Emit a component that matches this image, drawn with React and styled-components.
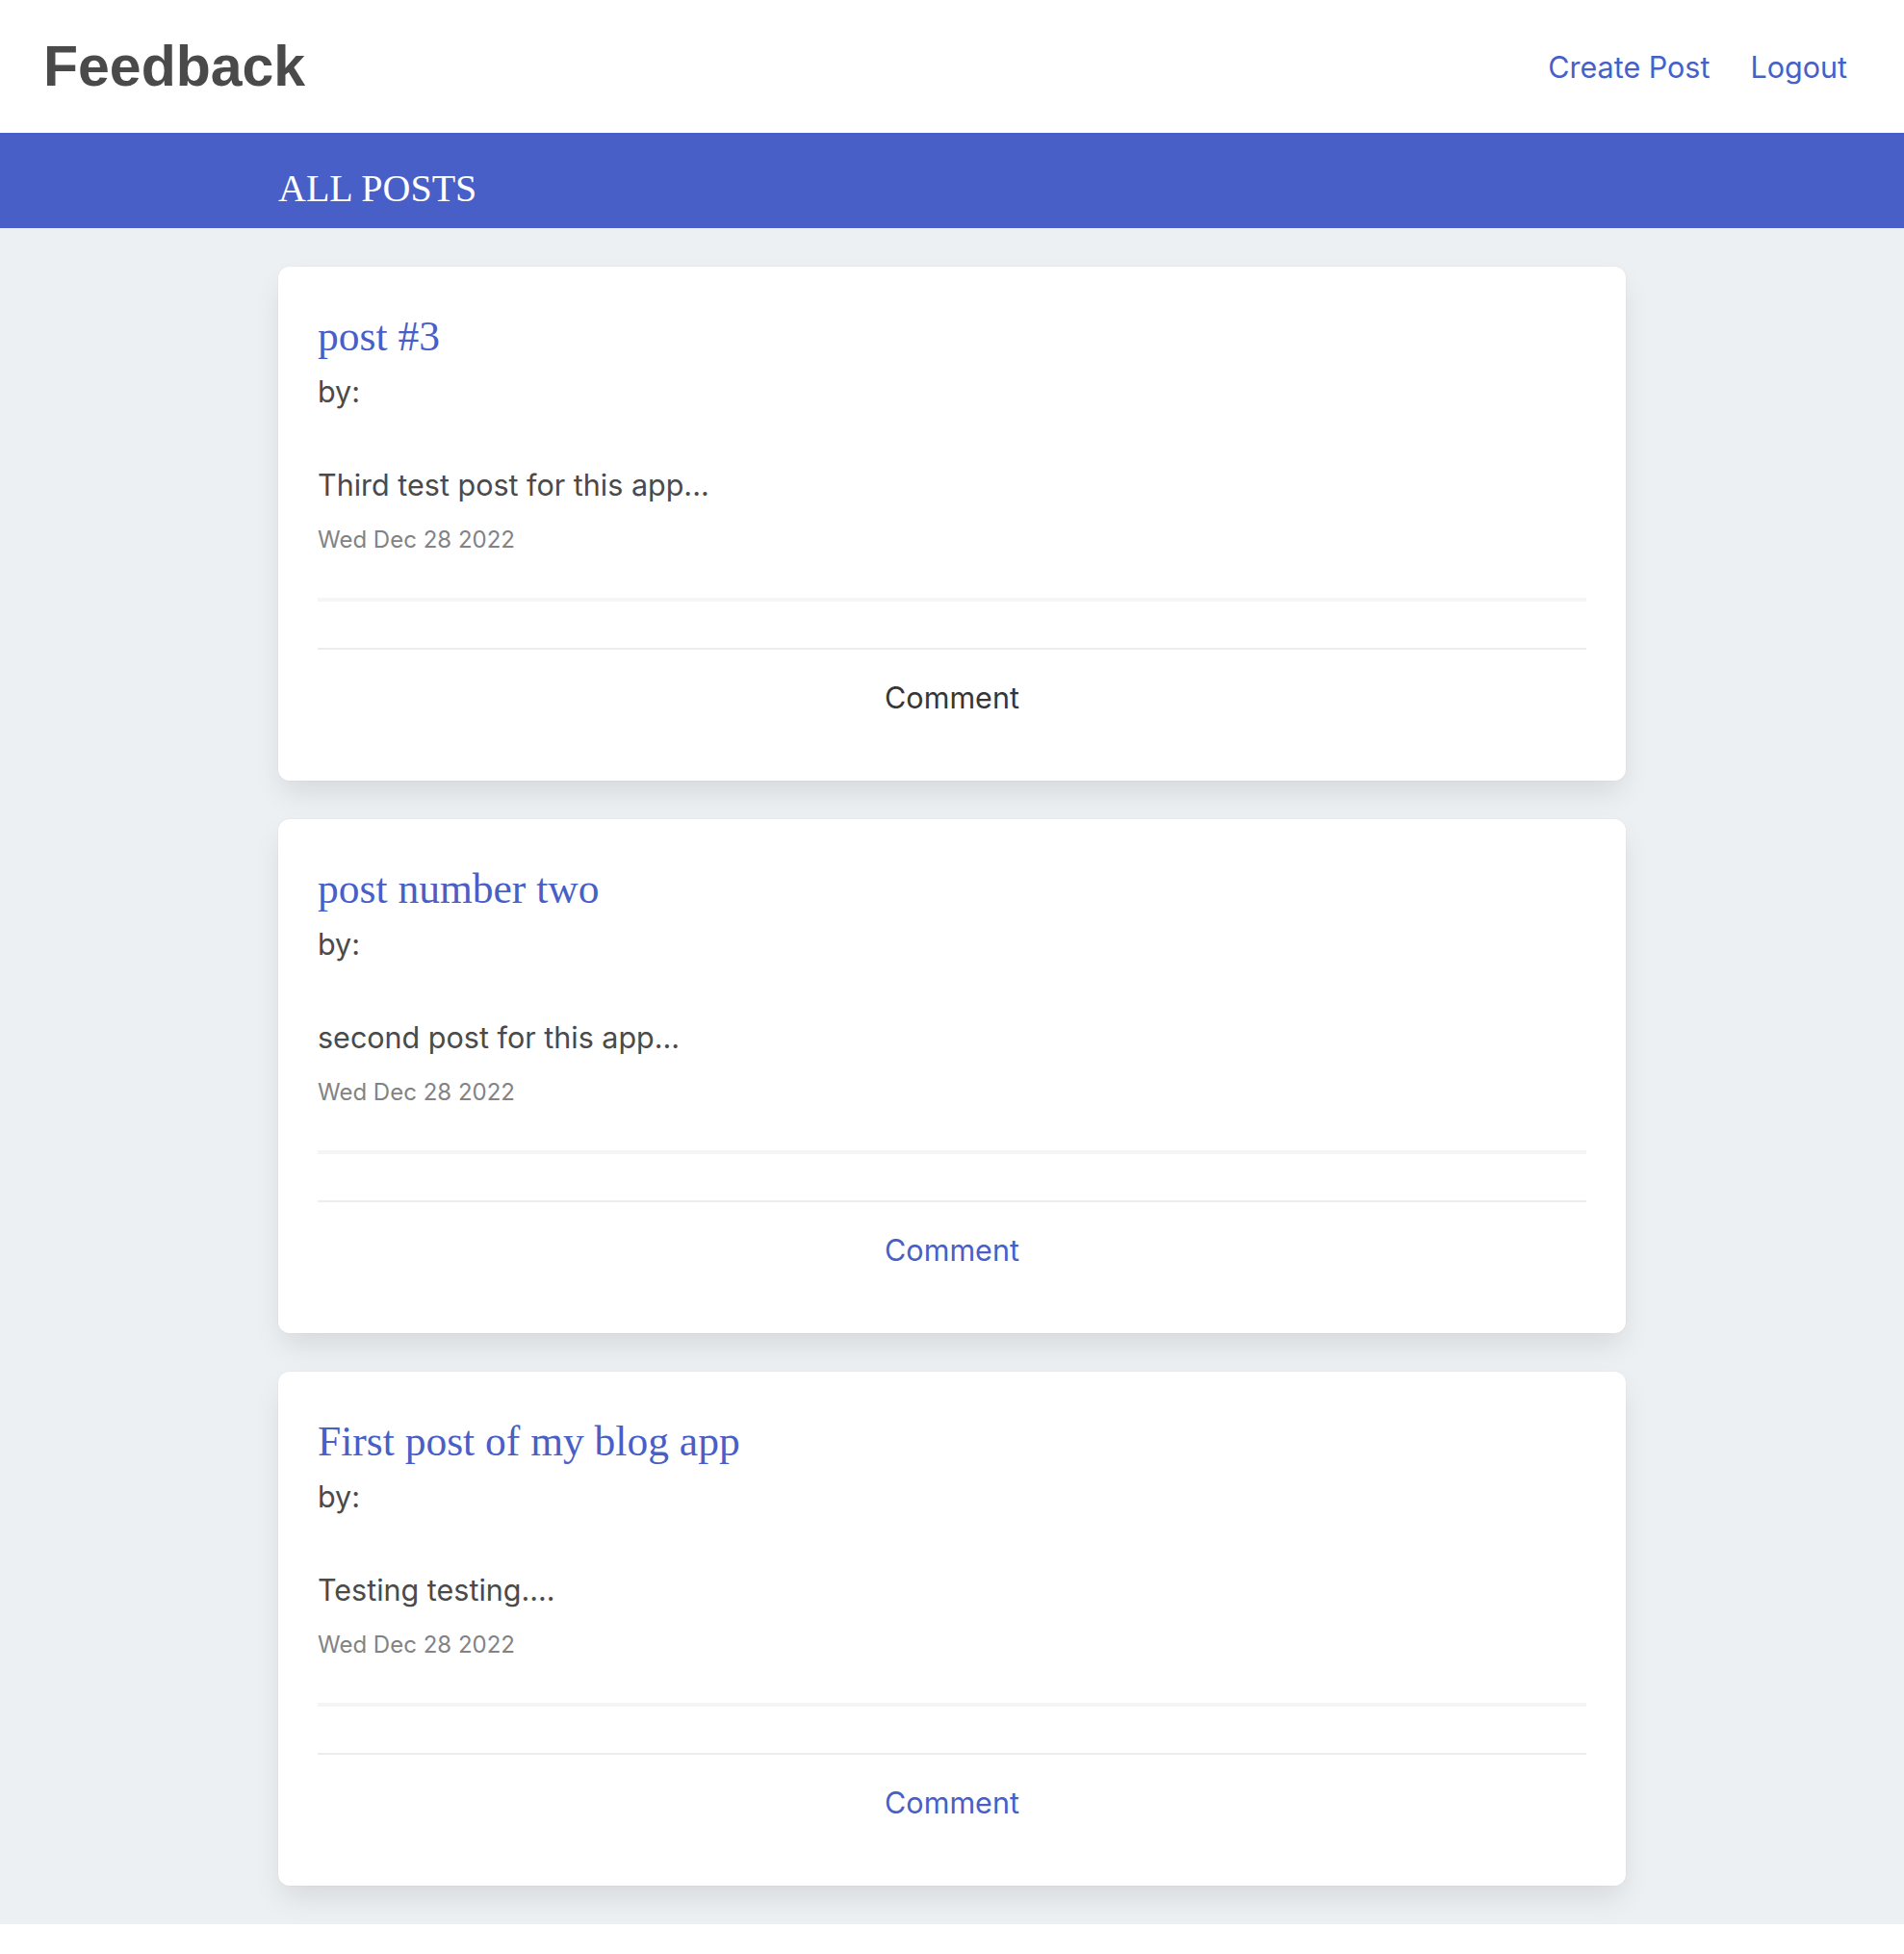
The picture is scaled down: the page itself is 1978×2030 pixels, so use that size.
import React from 'react';
import styled, { createGlobalStyle } from 'styled-components';

const GlobalStyle = createGlobalStyle`
  body {
    margin:0;
    background:#fff;
    font-family:'Inter', 'Noto Sans', sans-serif;
    color:#4a4a4a;
  }
`

const Navbar = styled.nav`
  height:138px;
  display:flex;
  align-items:center;
  justify-content:space-between;
  padding:0 59px 0 45px;
  background:#fff;
`

const Brand = styled.h1`
  margin:0;
  font-family:'Liberation Sans', Arial, sans-serif;
  font-weight:700;
  font-size:59px;
  color:#4a4a4a;
`

const NavLinks = styled.div`
  display:flex;
  gap:42px;
`

const NavLink = styled.a`
  font-size:30.5px;
  color:#485fc7;
  text-decoration:none;
  cursor:pointer;
`

const Hero = styled.section`
  height:99px;
  box-sizing:border-box;
  padding-top:34px;
  background:#485fc7;
`

const HeroInner = styled.div`
  width:1400px;
  margin:0 auto;
`

const HeroTitle = styled.h2`
  margin:0;
  font-family:'Liberation Serif', 'Times New Roman', serif;
  font-weight:400;
  font-size:40px;
  color:#fff;
`

const Main = styled.main`
  background:#edf0f3;
  padding:40px 0;
`

const List = styled.div`
  width:1400px;
  margin:0 auto;
  display:flex;
  flex-direction:column;
  gap:40px;
`

const Card = styled.article`
  background:#fff;
  border-radius:12px;
  padding:42px 41px 42px;
  box-shadow:0 15px 30px -4px rgba(10,10,10,0.1), 0 0 0 1px rgba(10,10,10,0.02);
`

const PostTitle = styled.h3`
  margin:0;
  font-family:'Liberation Serif', 'Times New Roman', serif;
  font-weight:400;
  font-size:43.5px;
  line-height:60px;
  color:#485fc7;
`

const Text = styled.p`
  margin:${p => p.$gap || 0}px 0 0;
  font-size:30.5px;
  line-height:45px;
  color:#4a4a4a;
`

const DateLine = styled.p`
  margin:17px 0 0;
  font-size:24px;
  line-height:36px;
  color:#838383;
`

const Rule = styled.hr`
  border:none;
  height:4px;
  background:#f5f5f5;
  margin:42px 0 48px;
`

const Footer = styled.footer`
  display:flex;
  border-top:2px solid #ededed;
`

const FooterItem = styled.a`
  flex:1;
  text-align:center;
  padding:27px 0 22px;
  font-size:30.5px;
  line-height:45px;
  color:${p => p.$active ? '#485fc7' : '#363636'};
  text-decoration:none;
  cursor:pointer;
`

const posts = [
  { id: 3, title: 'post #3', body: 'Third test post for this app...', date: 'Wed Dec 28 2022', active: false },
  { id: 2, title: 'post number two', body: 'second post for this app...', date: 'Wed Dec 28 2022', active: true },
  { id: 1, title: 'First post of my blog app', body: 'Testing testing....', date: 'Wed Dec 28 2022', active: true },
]

export default function App() {
  return (
    <>
      <GlobalStyle />
      <Navbar>
        <Brand>Feedback</Brand>
        <NavLinks>
          <NavLink>Create Post</NavLink>
          <NavLink>Logout</NavLink>
        </NavLinks>
      </Navbar>
      <Hero>
        <HeroInner>
          <HeroTitle>ALL POSTS</HeroTitle>
        </HeroInner>
      </Hero>
      <Main>
        <List>
          {posts.map(post =>
            <Card key={post.id}>
              <PostTitle>{post.title}</PostTitle>
              <Text $gap={5}>by:</Text>
              <Text $gap={52}>{post.body}</Text>
              <DateLine>{post.date}</DateLine>
              <Rule />
              <Footer>
                <FooterItem $active={post.active}>Comment</FooterItem>
              </Footer>
            </Card>
          )}
        </List>
      </Main>
    </>
  )
}
